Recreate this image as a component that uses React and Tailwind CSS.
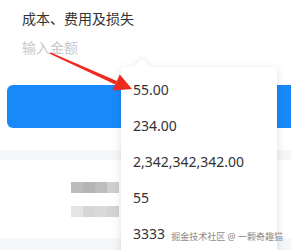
export default function App() {
  const items = ["55.00", "234.00", "2,342,342,342.00", "55", "3333"];
  return (
    <div
      className="relative w-[291px] h-[250px] overflow-hidden bg-white text-[#323233]"
      style={{ fontFamily: '"Noto Sans", "Noto Sans CJK SC", sans-serif' }}
    >
      <div className="flex flex-col">
        <div className="pl-[22px] pt-[9px] h-[30px] text-[14px] leading-[20px] text-[#323233]">成本、费用及损失</div>
        <div className="pl-[22px] h-[36px] text-[14px] leading-[36px] text-[#c8c9cc]">输入金额</div>
        <div className="ml-[7px] mt-[19px] h-[43px] rounded-l-[6px] bg-[#1989fa]" />
        <div className="h-[22px]" />
        <div className="h-[10px] bg-[#f5f6f7]" />
        <div className="h-[78px] flex flex-col pl-[71px] pt-[22px] gap-[13px]">
          <div className="flex h-[11px] w-[48px]">
            <div className="w-[12px] bg-[#bcbcbc]" />
            <div className="w-[12px] bg-[#b4b4b4]" />
            <div className="w-[12px] bg-[#bdbdbd]" />
            <div className="w-[12px] bg-[#cfcfcf]" />
          </div>
          <div className="flex h-[11px] w-[48px]">
            <div className="w-[12px] bg-[#e4e4e4]" />
            <div className="w-[12px] bg-[#d6d6d6]" />
            <div className="w-[12px] bg-[#dadada]" />
            <div className="w-[12px] bg-[#d4d4d4]" />
          </div>
        </div>
        <div className="h-[12px] bg-[#f5f6f7]" />
      </div>

      {/* dropdown */}
      <div className="absolute left-[121px] top-[67px] w-[156px] h-[200px] rounded-[4px] bg-white shadow-[0_2px_10px_rgba(0,0,0,0.13)] pt-[5px]">
        <div className="absolute left-[15px] top-[-6px] w-[12px] h-[12px] rotate-45 bg-white shadow-[-2px_-2px_4px_rgba(0,0,0,0.05)]" />
        <div className="relative flex flex-col">
          {items.map((t) => (
            <div key={t} className="h-[36px] pl-[12px] text-[14px] leading-[36px] text-[#323233]">
              {t}
            </div>
          ))}
        </div>
      </div>

      {/* red arrow */}
      <svg className="absolute left-0 top-0" width="291" height="250" viewBox="0 0 291 250">
        <polygon points="49.7,53.7 50.3,52.3 116.8,80.9 115.2,84.5" fill="#ee2a1f" />
        <polygon points="132,89 112.5,90.5 119.8,74.5" fill="#ee2a1f" />
      </svg>

      {/* watermark */}
      <div
        className="absolute right-[8px] top-[231px] text-[9px] leading-[12px] text-[#8a8a8a] whitespace-nowrap"
        style={{ textShadow: "0 0 2px #fff, 0 0 2px #fff" }}
      >
        掘金技术社区 @ 一颗奇趣猫
      </div>
    </div>
  );
}
